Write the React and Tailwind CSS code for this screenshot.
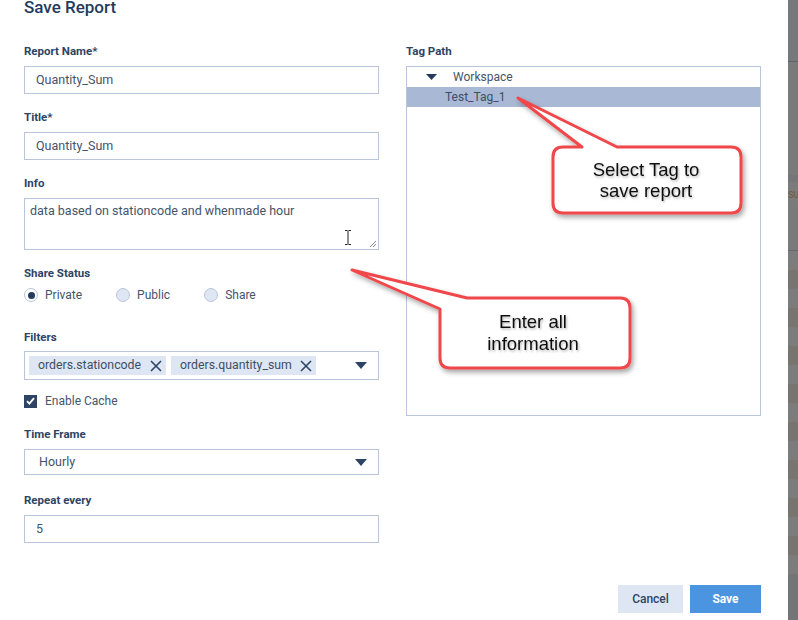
import React from 'react';

const Label = ({ children, className = '' }) => (
  <div className={`h-[16px] leading-[19px] text-[11.5px] font-bold text-[#2d4465] ${className}`}>
    {children}
  </div>
);

const Caret = () => (
  <svg width="12" height="7" viewBox="0 0 12 7" className="shrink-0">
    <path d="M0 0h12L6 7z" fill="#2d4465" />
  </svg>
);

const Cross = () => (
  <svg width="12" height="12" viewBox="0 0 12 12" className="shrink-0">
    <path d="M1 1l10 10M11 1L1 11" stroke="#2d4465" strokeWidth="1.6" />
  </svg>
);

const Radio = ({ checked, label }) => (
  <div className="flex items-center gap-[7px]">
    <span
      className={`w-[14px] h-[14px] rounded-full border border-[#b9c5da] flex items-center justify-center ${
        checked ? 'bg-white' : 'bg-[#dfe6f3]'
      }`}
    >
      {checked && <span className="w-[7px] h-[7px] rounded-full bg-[#233b5c]" />}
    </span>
    <span className="text-[12px] text-[#44546b]">{label}</span>
  </div>
);

const Chip = ({ text, width }) => (
  <div className={`h-[19px] ${width} bg-[#dfe6f3] flex items-center justify-between pl-[9px] pr-[4px]`}>
    <span className="text-[12.3px] text-[#3d4f66]">{text}</span>
    <Cross />
  </div>
);

const Callouts = () => (
  <svg className="absolute inset-0 pointer-events-none" width="788" height="620" viewBox="0 0 788 620">
    <defs>
      <filter id="sh" x="-20%" y="-20%" width="140%" height="140%">
        <feDropShadow dx="2" dy="3" stdDeviation="2.5" floodColor="#000" floodOpacity="0.35" />
      </filter>
      <filter id="tsh" x="-10%" y="-30%" width="120%" height="160%">
        <feDropShadow dx="1" dy="1.5" stdDeviation="1" floodColor="#000" floodOpacity="0.3" />
      </filter>
    </defs>
    <path
      d="M563 147 L582 147 L518 98 L617 147 L731 147 Q741 147 741 157 L741 203 Q741 213 731 213 L563 213 Q553 213 553 203 L553 157 Q553 147 563 147 Z"
      fill="#fff"
      stroke="#f0474c"
      strokeWidth="3"
      strokeLinejoin="round"
      filter="url(#sh)"
    />
    <path
      d="M467 298 L620 298 Q630 298 630 308 L630 358 Q630 368 620 368 L450 368 Q440 368 440 358 L440 309 L352 270 Z"
      fill="#fff"
      stroke="#f0474c"
      strokeWidth="3"
      strokeLinejoin="round"
      filter="url(#sh)"
    />
    <g fontFamily="'Liberation Sans', Arial, sans-serif" fontSize="18.5" fill="#111" textAnchor="middle" filter="url(#tsh)">
      <text x="646" y="176">Select Tag to</text>
      <text x="646" y="197">save report</text>
      <text x="533" y="328">Enter all</text>
      <text x="533" y="350">information</text>
    </g>
  </svg>
);

export default function App() {
  return (
    <div className="flex w-[798px] h-[620px] overflow-hidden font-['Roboto',sans-serif]">
      <div className="relative w-[788px] h-full bg-white pl-[24px] pr-[27px]">
        <div className="-mt-[3px] text-[17px] leading-[20px] font-medium text-[#1f3b5e]">Save Report</div>

        <div className="grid grid-cols-2 gap-x-[27px] mt-[25px]">
          {/* left column */}
          <div className="flex flex-col">
            <Label>Report Name*</Label>
            <div className="mt-[8px] h-[28px] border border-[#b9c5da] flex items-center pl-[11px] text-[12.5px] text-[#44546b]">
              Quantity_Sum
            </div>

            <Label className="mt-[14px]">Title*</Label>
            <div className="mt-[8px] h-[28px] border border-[#b9c5da] flex items-center pl-[11px] text-[12.5px] text-[#44546b]">
              Quantity_Sum
            </div>

            <Label className="mt-[14px]">Info</Label>
            <div className="relative mt-[8px] h-[52px] border border-[#b9c5da] pl-[5px] pt-[4px] text-[12.5px] leading-[16px] text-[#44546b]">
              data based on stationcode and whenmade hour
              <svg className="absolute right-[2px] bottom-[2px]" width="7" height="7" viewBox="0 0 7 7">
                <path d="M7 1L1 7M7 4L4 7" stroke="#888" strokeWidth="1" />
              </svg>
              <svg className="absolute left-[319px] top-[31px]" width="8" height="15" viewBox="0 0 8 15">
                <path d="M1 0.5h2.5M4.5 0.5h2.5M4 1v13M1 14.5h2.5M4.5 14.5h2.5" stroke="#222" strokeWidth="1" />
              </svg>
            </div>

            <Label className="mt-[14px]">Share Status</Label>
            <div className="mt-[7px] h-[16px] flex items-center gap-[34px]">
              <Radio checked label="Private" />
              <Radio label="Public" />
              <Radio label="Share" />
            </div>

            <Label className="mt-[25px]">Filters</Label>
            <div className="mt-[7px] h-[29px] border border-[#b9c5da] flex items-center pl-[4px] pr-[11px] gap-[5px]">
              <Chip text="orders.stationcode" width="w-[137px]" />
              <Chip text="orders.quantity_sum" width="w-[145px]" />
              <span className="ml-auto flex">
                <Caret />
              </span>
            </div>

            <div className="mt-[13px] h-[16px] flex items-center gap-[8px]">
              <span className="w-[13px] h-[13px] bg-[#2d4465] flex items-center justify-center">
                <svg width="9" height="8" viewBox="0 0 9 8">
                  <path d="M1 4.2l2.4 2.4L8 1.2" stroke="#fff" strokeWidth="1.8" fill="none" />
                </svg>
              </span>
              <span className="text-[12px] text-[#44546b]">Enable Cache</span>
            </div>

            <Label className="mt-[16px]">Time Frame</Label>
            <div className="mt-[8px] h-[26px] border border-[#b9c5da] flex items-center pl-[14px] pr-[11px] text-[12.5px] text-[#44546b]">
              Hourly
              <span className="ml-auto flex">
                <Caret />
              </span>
            </div>

            <Label className="mt-[16px]">Repeat every</Label>
            <div className="mt-[8px] h-[28px] border border-[#b9c5da] flex items-center pl-[11px] text-[12.5px] text-[#44546b]">
              5
            </div>
          </div>

          {/* right column */}
          <div className="flex flex-col">
            <Label>Tag Path</Label>
            <div className="mt-[8px] h-[350px] border border-[#b9c5da]">
              <div className="h-[20px] flex items-center pl-[19px] gap-[16px] text-[12px] text-[#44546b]">
                <svg width="11" height="6" viewBox="0 0 11 6">
                  <path d="M0 0h11L5.5 6z" fill="#233b5c" />
                </svg>
                Workspace
              </div>
              <div className="h-[20px] flex items-center pl-[38px] bg-[#a9b8d4] text-[12px] text-[#3d4f66]">
                Test_Tag_1
              </div>
            </div>
          </div>
        </div>

        <div className="mt-[42px] flex justify-end gap-[7px]">
          <button className="w-[65px] h-[28px] bg-[#dfe6f3] text-[12px] font-medium text-[#2d4465]">Cancel</button>
          <button className="w-[71px] h-[28px] bg-[#4a94e0] text-[12px] font-bold text-white">Save</button>
        </div>

        <Callouts />
      </div>

      {/* backdrop strip */}
      <div className="w-[10px] h-full flex flex-col bg-[#7a7a7a]">
        <div className="h-[61px] bg-[#76787b]" />
        <div className="h-[1px] bg-[#5f636b]" />
        <div className="h-[113px] bg-[#7a7a7a]" />
        <div className="h-[7px] bg-[#74767a]" />
        <div className="h-[26px] bg-[#7b7b7b] text-[9px] leading-[26px] text-[#6e5a3e] overflow-hidden">SU</div>
        <div className="h-[42px] bg-[#7a7a7a]" />
        <div className="h-[1px] bg-[#66686d]" />
        <div className="h-[19px] bg-[#7c7c7c]" />
        <div className="h-[19px] bg-[#78746f]" />
        <div className="h-[19px] bg-[#7c7c7c]" />
        <div className="h-[19px] bg-[#78746f]" />
        <div className="h-[19px] bg-[#7c7c7c]" />
        <div className="h-[19px] bg-[#78746f]" />
        <div className="h-[19px] bg-[#7c7c7c]" />
        <div className="h-[19px] bg-[#78746f]" />
        <div className="h-[19px] bg-[#7c7c7c]" />
        <div className="h-[19px] bg-[#78746f]" />
        <div className="h-[19px] bg-[#7c7c7c]" />
        <div className="h-[19px] bg-[#78746f]" />
        <div className="h-[19px] bg-[#7c7c7c]" />
        <div className="h-[19px] bg-[#78746f]" />
        <div className="h-[19px] bg-[#7c7c7c]" />
        <div className="h-[19px] bg-[#78746f]" />
        <div className="h-[19px] bg-[#7c7c7c]" />
        <div className="flex-1 bg-[#737577]" />
      </div>
    </div>
  );
}
